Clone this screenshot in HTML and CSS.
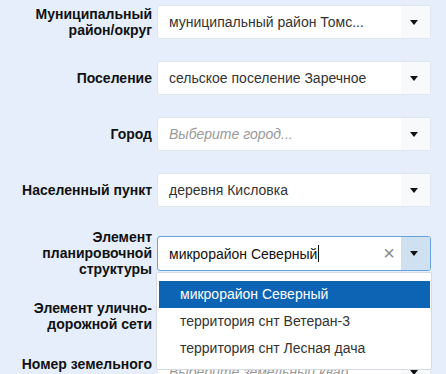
FILE: index.html
```html
<!DOCTYPE html>
<html lang="ru">
<head>
    <meta charset="UTF-8">
    <meta name="viewport" content="width=device-width, initial-scale=1.0">
    <title>Адрес</title>
    <link rel="stylesheet" href="styles.css">
</head>
<body>
    <div class="address-form">
        <div class="form-row">
            <label class="field-label">Муниципальный<br>район/округ</label>
            <div class="select-box">
                <span class="select-value">муниципальный район Томс...</span>
                <span class="select-arrow"></span>
            </div>
        </div>

        <div class="form-row">
            <label class="field-label">Поселение</label>
            <div class="select-box">
                <span class="select-value">сельское поселение Заречное</span>
                <span class="select-arrow"></span>
            </div>
        </div>

        <div class="form-row">
            <label class="field-label">Город</label>
            <div class="select-box">
                <span class="select-value placeholder">Выберите город...</span>
                <span class="select-arrow"></span>
            </div>
        </div>

        <div class="form-row">
            <label class="field-label">Населенный пункт</label>
            <div class="select-box">
                <span class="select-value">деревня Кисловка</span>
                <span class="select-arrow"></span>
            </div>
        </div>

        <div class="form-row">
            <label class="field-label">Элемент<br>планировочной<br>структуры</label>
            <div class="select-box is-open">
                <span class="select-value">микрорайон Северный<span class="caret"></span></span>
                <span class="select-clear">&times;</span>
                <span class="select-arrow"></span>

                <ul class="select-dropdown">
                    <li class="option is-active">микрорайон Северный</li>
                    <li class="option">территория снт Ветеран-3</li>
                    <li class="option">территория снт Лесная дача</li>
                </ul>
            </div>
        </div>

        <div class="form-row">
            <label class="field-label">Элемент улично-<br>дорожной сети</label>
            <div class="select-box">
                <span class="select-value"></span>
                <span class="select-arrow"></span>
            </div>
        </div>

        <div class="form-row">
            <label class="field-label">Номер земельного<br>квартала</label>
            <div class="select-box">
                <span class="select-value placeholder">Выберите земельный квар...</span>
                <span class="select-arrow"></span>
            </div>
        </div>
    </div>
</body>
</html>
```

FILE: styles.css
```css
html, body {
    margin: 0;
    height: 100%;
    overflow: hidden;
}

body {
    background: #e5eefa;
    font-family: "Liberation Sans", Arial, sans-serif;
    color: #333;
}

.address-form {
    display: flex;
    flex-direction: column;
    gap: 22px;
    padding-top: 5px;
}

.form-row {
    display: grid;
    grid-template-columns: 152px 274px;
    column-gap: 5px;
    align-items: center;
}

.field-label {
    text-align: right;
    font-size: 14px;
    font-weight: bold;
    line-height: 16px;
    color: #111;
}

/* select2-like box */
.select-box {
    position: relative;
    display: flex;
    align-items: center;
    height: 34px;
    box-sizing: border-box;
    background: #fff;
    border: 1px solid #dfe6ef;
    border-radius: 3px;
}

.select-value {
    flex: 1;
    padding-left: 11px;
    font-size: 14px;
    white-space: nowrap;
    overflow: hidden;
}

.select-value.placeholder {
    color: #999;
    font-style: italic;
}

.select-arrow {
    position: relative;
    align-self: stretch;
    width: 29px;
    background: #f8f9fb;
    border-radius: 0 2px 2px 0;
}

.select-arrow::after {
    content: "";
    position: absolute;
    top: 50%;
    left: 9px;
    margin-top: -2px;
    border-left: 4px solid transparent;
    border-right: 4px solid transparent;
    border-top: 5px solid #111;
}

.select-box.is-open {
    height: 35px;
    border-color: #66a2dc;
}

.select-box.is-open .select-arrow {
    background: #cfe0f1;
}

.select-box.is-open .select-value {
    color: #111;
}

.caret {
    display: inline-block;
    width: 1px;
    height: 17px;
    margin-left: 1px;
    vertical-align: -3px;
    background: #111;
}

.select-clear {
    width: 20px;
    margin-right: 2px;
    color: #8a8a8a;
    font-size: 20px;
    line-height: 1;
    text-align: center;
}

.select-dropdown {
    position: absolute;
    top: 100%;
    left: -2px;
    right: -2px;
    z-index: 10;
    margin: 2px 0 0;
    padding: 8px 1px 7px 2px;
    list-style: none;
    background: #fff;
    border: 1px solid #d6dbe2;
    border-radius: 2px;
}

.option {
    height: 27px;
    line-height: 27px;
    padding-left: 21px;
    font-size: 14px;
    color: #333;
}

.option.is-active {
    background: #0e64b4;
    color: #fff;
}
```
